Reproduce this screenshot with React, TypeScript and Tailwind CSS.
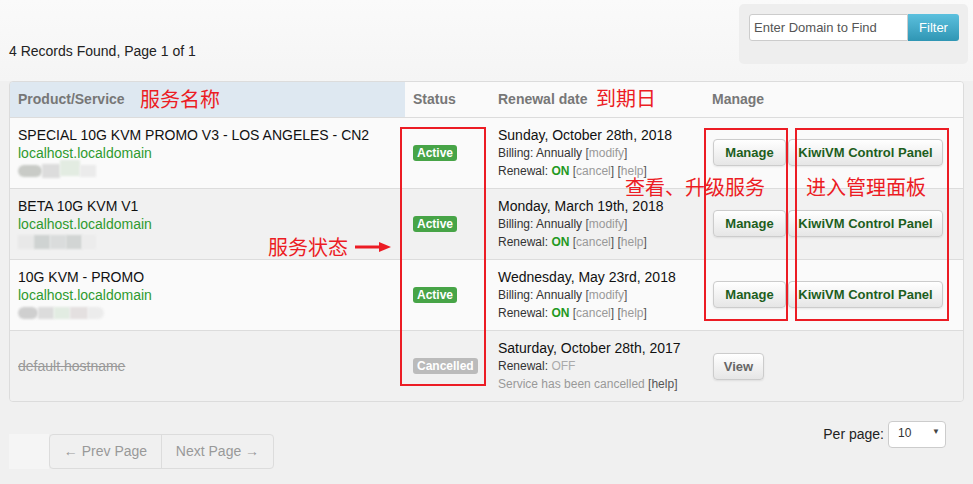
import React from "react";

type Row = {
  title?: string;
  domain: string;
  cancelled?: boolean;
  date: string;
  blob?: number;
};

const rows: Row[] = [
  { title: "SPECIAL 10G KVM PROMO V3 - LOS ANGELES - CN2", domain: "localhost.localdomain", date: "Sunday, October 28th, 2018", blob: 1 },
  { title: "BETA 10G KVM V1", domain: "localhost.localdomain", date: "Monday, March 19th, 2018", blob: 2 },
  { title: "10G KVM - PROMO", domain: "localhost.localdomain", date: "Wednesday, May 23rd, 2018", blob: 3 },
  { domain: "default.hostname", cancelled: true, date: "Saturday, October 28th, 2017" },
];

function Blob({ kind }: { kind: number }) {
  if (kind === 1)
    return (
      <div className="flex h-[18px] items-center">
        <div className="h-[12px] w-[24px] rounded-full bg-[#c9cbc7] blur-[1px]" />
        <div className="h-[14px] w-[18px] bg-[#dcdcdc] blur-[1px]" />
        <div className="h-[16px] w-[20px] -mt-[6px] bg-[#e3ece2] blur-[1px]" />
        <div className="h-[12px] w-[16px] bg-[#ebebeb] blur-[1px]" />
      </div>
    );
  if (kind === 2)
    return (
      <div className="flex h-[18px] items-center">
        <div className="h-[14px] w-[16px] bg-[#e8e8e8] blur-[1px]" />
        <div className="h-[14px] w-[16px] bg-[#cfd3d2] blur-[1px]" />
        <div className="h-[14px] w-[16px] bg-[#dadcdc] blur-[1px]" />
        <div className="h-[14px] w-[16px] bg-[#d2d5d4] blur-[1px]" />
        <div className="h-[14px] w-[14px] bg-[#ececec] blur-[1px]" />
      </div>
    );
  return (
    <div className="flex h-[18px] items-center">
      <div className="h-[12px] w-[20px] rounded-full bg-[#cfcfcf] blur-[1px]" />
      <div className="h-[12px] w-[16px] bg-[#dcdcdc] blur-[1px]" />
      <div className="h-[12px] w-[16px] bg-[#e2ece2] blur-[1px]" />
      <div className="h-[12px] w-[18px] bg-[#e4e0e0] blur-[1px]" />
      <div className="h-[12px] w-[16px] rounded-r-full bg-[#ececec] blur-[1px]" />
    </div>
  );
}

const btn =
  "whitespace-nowrap rounded-[4px] border border-[#ccc] bg-gradient-to-b from-white to-[#e6e6e6] shadow-[0_1px_2px_rgba(0,0,0,0.08)] h-[27px] px-[6px] text-[13px] font-bold";

export default function App() {
  return (
    <div className="relative h-[484px] w-[973px] overflow-hidden bg-[#f0f0f0] text-[14px] text-[#222]" style={{ fontFamily: '"Liberation Sans", Arial, sans-serif' }}>
      {/* top area */}
      <div className="flex h-[81px] items-start justify-between bg-gradient-to-b from-[#fafafa] to-[#f5f5f5] pl-[9px] pr-[5px] pt-[4px]">
        <div className="mt-[37px] text-[14px] text-[#222]">4 Records Found, Page 1 of 1</div>
        <div className="flex h-[60px] w-[229px] items-start rounded-[5px] bg-[#eeeeee] pl-[10px] pt-[10px]">
          <div className="flex h-[27px] w-[159px] items-center rounded-l-[3px] border border-[#ccc] bg-white px-[4px] text-[13px] text-[#555]">
            Enter Domain to Find
          </div>
          <div className="flex h-[27px] w-[51px] items-center justify-center rounded-r-[3px] bg-gradient-to-b from-[#5bc0de] to-[#2f96b4] text-[13px] text-white">
            Filter
          </div>
        </div>
      </div>

      {/* table */}
      <div className="mx-[9px] overflow-hidden rounded-[4px] border border-[#dcdcdc]">
        <table className="w-full table-fixed border-collapse">
          <colgroup>
            <col className="w-[395px]" />
            <col className="w-[85px]" />
            <col className="w-[214px]" />
            <col />
          </colgroup>
          <thead>
            <tr className="h-[35px] text-left text-[14px] font-bold text-[#777]">
              <th className="bg-[#dee8f1] pl-[8px] font-bold">Product/Service</th>
              <th className="bg-[#fafafa] pl-[8px] font-bold">Status</th>
              <th className="bg-[#fafafa] pl-[8px] font-bold">Renewal date</th>
              <th className="bg-[#fafafa] pl-[8px] font-bold">Manage</th>
            </tr>
          </thead>
          <tbody>
            {rows.map((r, i) => (
              <tr key={i} className={`border-t border-[#dcdcdc] ${i % 2 === 0 ? "bg-[#fafafa]" : "bg-[#f1f1f1]"} ${r.cancelled ? "bg-[#efefef]" : ""}`}>
                <td className="py-[8px] pl-[8px] align-middle text-[14px] leading-[18px]">
                  {r.cancelled ? (
                    <div className="text-[#999] line-through">{r.domain}</div>
                  ) : (
                    <>
                      <div className="text-[#111]">{r.title}</div>
                      <div className="text-[#2f9a2f]">{r.domain}</div>
                      <Blob kind={r.blob ?? 1} />
                    </>
                  )}
                </td>
                <td className="pl-[8px] align-middle">
                  {r.cancelled ? (
                    <span className="mt-[2px] inline-block rounded-[3px] bg-[#bbbbbb] px-[4px] text-[12px] font-bold leading-[16px] text-white">Cancelled</span>
                  ) : (
                    <span className="inline-block rounded-[3px] bg-[#47a447] px-[4px] text-[12px] font-bold leading-[16px] text-white">Active</span>
                  )}
                </td>
                <td className="py-[8px] pl-[8px] align-middle leading-[18px]">
                  <div className="text-[14px] text-[#111]">{r.date}</div>
                  {r.cancelled ? (
                    <>
                      <div className="text-[12px] text-[#333]">
                        Renewal: <span className="text-[#aaa]">OFF</span>
                      </div>
                      <div className="text-[12px] text-[#999]">
                        Service has been cancelled <span className="text-[#555]">[</span><span className="text-[#555]">help</span><span className="text-[#555]">]</span>
                      </div>
                    </>
                  ) : (
                    <>
                      <div className="text-[12px] text-[#333]">
                        Billing: Annually <span className="text-[#555]">[</span><span className="text-[#999]">modify</span><span className="text-[#555]">]</span>
                      </div>
                      <div className="text-[12px] text-[#333]">
                        Renewal: <span className="font-bold text-[#229922]">ON</span>{" "}
                        <span className="text-[#555]">[</span><span className="text-[#999]">cancel</span><span className="text-[#555]">]</span>{" "}
                        <span className="text-[#555]">[</span><span className="text-[#999]">help</span><span className="text-[#555]">]</span>
                      </div>
                    </>
                  )}
                </td>
                <td className="pl-[9px] align-middle">
                  {r.cancelled ? (
                    <button className={`${btn} mt-[2px] w-[51px] text-[#666]`}>View</button>
                  ) : (
                    <div className="flex gap-[2px]">
                      <button className={`${btn} w-[73px] text-[#1d5e1d]`}>Manage</button>
                      <button className={`${btn} w-[155px] text-[#1d5e1d]`}>KiwiVM Control Panel</button>
                    </div>
                  )}
                </td>
              </tr>
            ))}
          </tbody>
        </table>
      </div>

      {/* pagination */}
      <div className="mt-[19px] flex items-start justify-between pl-[9px] pr-[27px]">
        <div className="mt-[13px] flex h-[35px]">
          <div className="w-[40px] bg-[#f5f5f5]" />
          <div className="flex overflow-hidden rounded-[4px] border border-[#dcdcdc] bg-[#f0f0f0] text-[14px] text-[#999]">
            <div className="flex w-[112px] items-center justify-center border-r border-[#dcdcdc]">← Prev Page</div>
            <div className="flex w-[111px] items-center justify-center">Next Page →</div>
          </div>
        </div>
        <div className="flex items-center gap-[4px]">
          <span className="text-[14px] text-[#222]">Per page:</span>
          <div className="flex h-[27px] w-[58px] items-center justify-between rounded-[4px] border border-[#ccc] bg-white pl-[9px] pr-[5px] text-[12px] text-[#333]">
            <span className="-mt-[3px]">10</span>
            <span className="-mt-[4px] text-[8px] text-[#444]">▼</span>
          </div>
        </div>
      </div>

      {/* red annotations */}
      <div className="pointer-events-none absolute inset-0 text-[20px] leading-none text-[#ec1c24]" style={{ fontFamily: '"Noto Sans CJK SC", sans-serif' }}>
        <div className="absolute left-[140px] top-[89px]">服务名称</div>
        <div className="absolute left-[596px] top-[88px]">到期日</div>
        <div className="absolute left-[268px] top-[237px]">服务状态</div>
        <svg className="absolute left-[355px] top-[240px]" width="36" height="14" viewBox="0 0 36 14">
          <line x1="0" y1="7" x2="26" y2="7" stroke="#ec1c24" strokeWidth="3" />
          <polygon points="24,2 36,7 24,12" fill="#ec1c24" />
        </svg>
        <div className="absolute left-[625px] top-[177px]">查看、升级服务</div>
        <div className="absolute left-[806px] top-[177px]">进入管理面板</div>
        <div className="absolute left-[400px] top-[127px] h-[259px] w-[86px] border-2 border-[#ec1c24]" />
        <div className="absolute left-[704px] top-[128px] h-[193px] w-[84px] border-2 border-[#ec1c24]" />
        <div className="absolute left-[795px] top-[128px] h-[193px] w-[154px] border-2 border-[#ec1c24]" />
      </div>
    </div>
  );
}
